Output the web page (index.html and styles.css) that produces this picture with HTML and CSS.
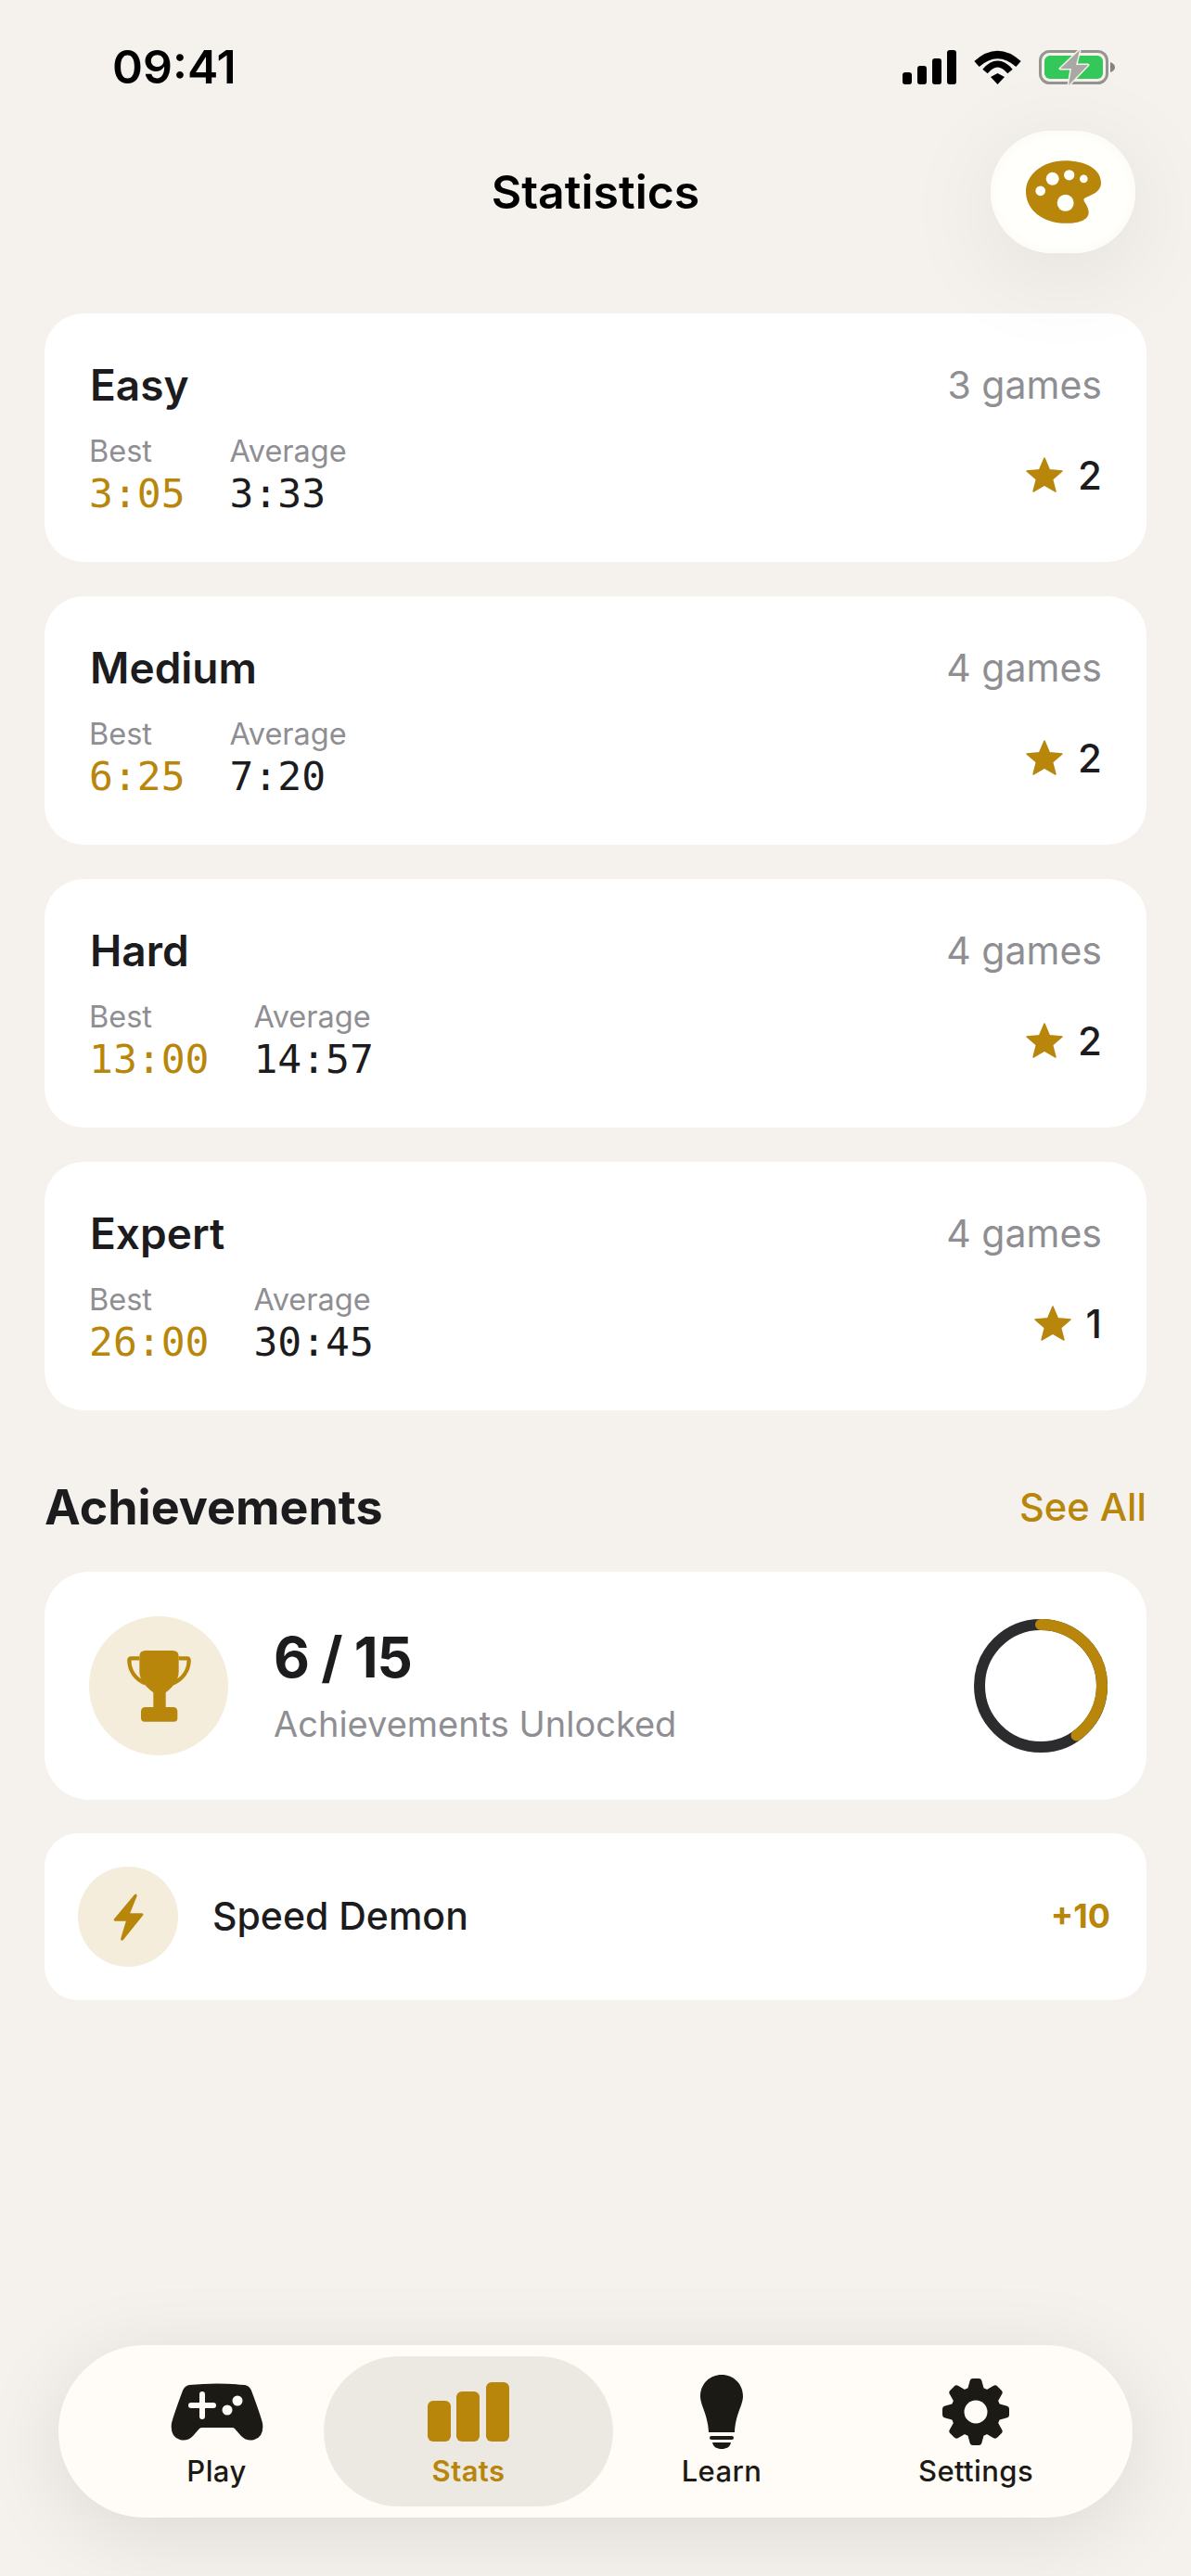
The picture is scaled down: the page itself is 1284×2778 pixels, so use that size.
FILE: index.html
```html
<!DOCTYPE html>
<html lang="en">
  <head>
    <meta charset="UTF-8" />
    <meta name="viewport" content="width=device-width, initial-scale=1.0" />
    <title>Statistics</title>
    <link rel="stylesheet" href="styles.css">
  </head>
  <body>
    <svg class="defs" width="0" height="0">
      <defs>
        <path id="star" d="M22 4 L27.4 16.8 L41 18 L30.6 27 L34 40 L22 33.2 L10 40 L13.4 27 L3 18 L16.6 16.8 Z" />
        <path id="tooth" d="M-9 -24 L-6.5 -33 Q-6 -36 -3 -36 H3 Q6 -36 6.5 -33 L9 -24 Z" />
      </defs>
    </svg>

    <!-- Status bar -->
    <div class="status-bar">
      <span class="time">09:41</span>
      <div class="status-icons">
        <svg width="58" height="37" viewBox="0 0 58 37">
          <rect x="0" y="24" width="10" height="13" rx="3" />
          <rect x="16" y="17" width="10" height="20" rx="3" />
          <rect x="32" y="9" width="10" height="28" rx="3" />
          <rect x="48" y="0" width="10" height="37" rx="3" />
        </svg>
        <svg width="51" height="37" viewBox="0 0 51 37">
          <path d="M3 15 Q25.5 -5 48 15" fill="none" stroke="#000" stroke-width="8" />
          <path d="M12 23 Q25.5 7 39 23" fill="none" stroke="#000" stroke-width="7" />
          <path d="M18 29 L25.5 25 L33 29 L25.5 37 Z" />
        </svg>
        <svg width="82" height="39" viewBox="0 0 82 39">
          <rect x="1.5" y="2.5" width="72" height="34" rx="10" fill="none" stroke="#96948f" stroke-width="3" />
          <rect x="6" y="7" width="63" height="25" rx="6" fill="#34c759" />
          <path d="M77 14 Q82 16 82 19.5 Q82 23 77 25 Z" fill="#85837e" />
          <path d="M44 1 L23 21 H35 L32 39 L53 17 H40 Z" fill="#aaa8a3" stroke="#f5f2ed" stroke-width="3" stroke-linejoin="round" paint-order="stroke" />
        </svg>
      </div>
    </div>

    <!-- Header -->
    <header class="header">
      <h1>Statistics</h1>
      <button class="theme-btn">
        <svg width="81" height="68" viewBox="0 0 243 203">
          <path fill="#b8860b" d="M125 0 C195 0 243 28 243 72 C243 105 205 112 190 122 C180 130 200 140 203 165 C205 190 175 203 130 203 C55 203 0 160 0 100 C0 45 55 0 125 0 Z" />
          <circle cx="86" cy="59" r="21" fill="#fffffb" />
          <circle cx="140" cy="47" r="17" fill="#fffffb" />
          <circle cx="187" cy="59" r="13" fill="#fffffb" />
          <circle cx="47" cy="98" r="16" fill="#fffffb" />
          <circle cx="128" cy="137" r="27" fill="#fffffb" />
        </svg>
      </button>
    </header>

    <main class="content">
      <div class="card level">
        <div class="level-top">
          <span class="level-name">Easy</span>
          <span class="games">3 games</span>
        </div>
        <div class="level-bottom">
          <div class="times">
            <div><div class="time-label">Best</div><div class="time-value best">3:05</div></div>
            <div><div class="time-label">Average</div><div class="time-value">3:33</div></div>
          </div>
          <div class="stars"><svg width="44" height="44" viewBox="0 0 44 44"><use href="#star" /></svg><span>2</span></div>
        </div>
      </div>

      <div class="card level">
        <div class="level-top">
          <span class="level-name">Medium</span>
          <span class="games">4 games</span>
        </div>
        <div class="level-bottom">
          <div class="times">
            <div><div class="time-label">Best</div><div class="time-value best">6:25</div></div>
            <div><div class="time-label">Average</div><div class="time-value">7:20</div></div>
          </div>
          <div class="stars"><svg width="44" height="44" viewBox="0 0 44 44"><use href="#star" /></svg><span>2</span></div>
        </div>
      </div>

      <div class="card level">
        <div class="level-top">
          <span class="level-name">Hard</span>
          <span class="games">4 games</span>
        </div>
        <div class="level-bottom">
          <div class="times">
            <div><div class="time-label">Best</div><div class="time-value best">13:00</div></div>
            <div><div class="time-label">Average</div><div class="time-value">14:57</div></div>
          </div>
          <div class="stars"><svg width="44" height="44" viewBox="0 0 44 44"><use href="#star" /></svg><span>2</span></div>
        </div>
      </div>

      <div class="card level">
        <div class="level-top">
          <span class="level-name">Expert</span>
          <span class="games">4 games</span>
        </div>
        <div class="level-bottom">
          <div class="times">
            <div><div class="time-label">Best</div><div class="time-value best">26:00</div></div>
            <div><div class="time-label">Average</div><div class="time-value">30:45</div></div>
          </div>
          <div class="stars"><svg width="44" height="44" viewBox="0 0 44 44"><use href="#star" /></svg><span>1</span></div>
        </div>
      </div>

      <div class="section-head">
        <h2>Achievements</h2>
        <span class="see-all">See All</span>
      </div>

      <div class="card summary">
        <div class="badge badge-large">
          <svg width="69" height="78" viewBox="0 0 207 232">
            <path d="M40 27 H13 Q7 27 7 35 C8 70 30 95 58 108" fill="none" stroke="#b8860b" stroke-width="13" />
            <path d="M167 27 H194 Q200 27 200 35 C199 70 177 95 149 108" fill="none" stroke="#b8860b" stroke-width="13" />
            <path fill="#b8860b" d="M40 20 Q40 2 60 2 H147 Q167 2 167 20 V70 C167 100 145 122 125 138 V185 H148 Q163 185 163 200 V220 Q163 232 151 232 H57 Q45 232 45 220 V200 Q45 185 60 185 H85 V138 C65 122 40 100 40 70 Z" />
          </svg>
        </div>
        <div class="summary-text">
          <div class="summary-count">6 / 15</div>
          <div class="summary-label">Achievements Unlocked</div>
        </div>
        <svg class="ring" width="144" height="144" viewBox="0 0 144 144">
          <circle cx="72" cy="72" r="66" fill="none" stroke="#2c2c2e" stroke-width="12" />
          <circle cx="72" cy="72" r="66" fill="none" stroke="#b8860b" stroke-width="12" stroke-linecap="round"
            stroke-dasharray="165.9 414.7" transform="rotate(-90 72 72)" />
        </svg>
      </div>

      <div class="card achievement">
        <div class="badge badge-small">
          <svg width="33" height="53" viewBox="0 0 100 158">
            <path fill="#b8860b" d="M70 5 L3 85 Q0 92 8 92 H42 L25 148 Q24 160 33 153 L98 72 Q100 66 92 66 H55 L78 9 Q77 0 70 5 Z" />
          </svg>
        </div>
        <span class="achievement-name">Speed Demon</span>
        <span class="points">+10</span>
      </div>
    </main>

    <!-- Tab bar -->
    <nav class="tabbar">
      <div class="tab">
        <div class="tab-icon">
          <svg width="100" height="62" viewBox="0 0 100 62">
            <path fill="#1c1a15" d="M20 2 Q50 -1 80 2 Q85 3 87 8 Q96 32 99 43 Q101 58 90 61 Q82 63 76 57 L69 49 Q68 48 66 48 H34 Q32 48 31 49 L24 57 Q18 63 10 61 Q-1 58 1 43 Q4 32 13 8 Q15 3 20 2 Z" />
            <path d="M22 24 H46 M34 12 V36" stroke="#fffcf7" stroke-width="6" stroke-linecap="round" />
            <circle cx="61" cy="29" r="5.5" fill="#fffcf7" />
            <circle cx="72" cy="19" r="5.5" fill="#fffcf7" />
          </svg>
        </div>
        <span>Play</span>
      </div>
      <div class="tab active">
        <div class="tab-icon">
          <svg width="88" height="64" viewBox="0 0 88 64">
            <rect x="0" y="20" width="25" height="44" rx="6" />
            <rect x="31" y="10" width="25" height="54" rx="6" />
            <rect x="63" y="0" width="25" height="64" rx="6" />
          </svg>
        </div>
        <span>Stats</span>
      </div>
      <div class="tab">
        <div class="tab-icon">
          <svg width="46" height="80" viewBox="0 0 46 80">
            <path fill="#1c1a15" d="M23 0 C36 0 46 10 46 23 C46 33 38 42 37 62 H9 C8 42 0 33 0 23 C0 10 10 0 23 0 Z" />
            <rect x="10" y="66" width="26" height="4" rx="2" fill="#1c1a15" />
            <path fill="#1c1a15" d="M13 73 H33 C32 78 28 80 23 80 C18 80 14 78 13 73 Z" />
          </svg>
        </div>
        <span>Learn</span>
      </div>
      <div class="tab">
        <div class="tab-icon">
          <svg width="72" height="72" viewBox="-36 -36 72 72">
            <g fill="#1c1a15">
              <circle r="27" />
              <use href="#tooth" />
              <use href="#tooth" transform="rotate(45)" />
              <use href="#tooth" transform="rotate(90)" />
              <use href="#tooth" transform="rotate(135)" />
              <use href="#tooth" transform="rotate(180)" />
              <use href="#tooth" transform="rotate(225)" />
              <use href="#tooth" transform="rotate(270)" />
              <use href="#tooth" transform="rotate(315)" />
            </g>
            <circle r="12.5" fill="#fffcf7" />
          </svg>
        </div>
        <span>Settings</span>
      </div>
    </nav>
  </body>
</html>
```

FILE: styles.css
```css
* {
  box-sizing: border-box;
}

body {
  font-family: Inter, "Noto Sans", sans-serif;
  background-color: #f5f2ed;
  color: #1c1c1e;
  margin: 0;
  height: 2778px;
  overflow: hidden;
  display: flex;
  flex-direction: column;
}

.defs {
  position: absolute;
}

/* Status bar */
.status-bar {
  display: flex;
  justify-content: space-between;
  align-items: center;
  height: 56px;
  margin-top: 44px;
  padding: 0 82px 0 121px;
}

.time {
  font-size: 50px;
  font-weight: 600;
  color: #000;
}

.status-icons {
  display: flex;
  align-items: center;
  gap: 19px;
}

/* Header */
.header {
  position: relative;
  z-index: 1;
  display: flex;
  justify-content: center;
  align-items: center;
  height: 132px;
  margin-top: 41px;
}

h1 {
  font-size: 50px;
  font-weight: 600;
  color: #000;
  margin: 0;
}

.theme-btn {
  position: absolute;
  right: 60px;
  top: 0;
  width: 156px;
  height: 132px;
  display: flex;
  align-items: center;
  justify-content: center;
  border: none;
  padding: 0;
  border-radius: 66px;
  background-color: #fffffb;
  box-shadow: inset 0 0 8px 4px #fdfbf7, 0 20px 110px rgba(0, 0, 0, 0.08);
}

/* Cards */
.content {
  padding: 65px 48px 0;
}

.card {
  background-color: #fff;
  border-radius: 42px;
}

.level {
  height: 268px;
  padding: 49px 48px 48px;
  margin-bottom: 37px;
}

.level-top {
  display: flex;
  justify-content: space-between;
  align-items: center;
  height: 56px;
}

.level-name {
  font-size: 46px;
  font-weight: 600;
  padding-left: 1px;
}

.games {
  font-size: 41px;
  color: #8e8e93;
}

.level-bottom {
  display: flex;
  justify-content: space-between;
  align-items: center;
  margin-top: 25px;
}

.times {
  display: flex;
  gap: 48px;
}

.time-label {
  font-size: 32.5px;
  line-height: 38px;
  color: #8e8e93;
}

.time-value {
  font-family: "DejaVu Sans Mono", "Liberation Mono", monospace;
  font-size: 43px;
  line-height: 48px;
  margin-top: 2px;
}

.time-value.best {
  color: #b8860b;
}

.stars {
  display: flex;
  align-items: center;
  gap: 14px;
  font-size: 42px;
  font-weight: 500;
}

.stars svg {
  fill: #b8860b;
  stroke: #b8860b;
  stroke-width: 1.5;
  stroke-linejoin: round;
}

/* Achievements */
.section-head {
  display: flex;
  justify-content: space-between;
  align-items: center;
  height: 64px;
  margin-top: 72px;
  margin-bottom: 38px;
}

h2 {
  font-size: 52px;
  font-weight: 700;
  margin: 0;
}

.see-all {
  font-size: 41.5px;
  font-weight: 500;
  color: #b8860b;
}

.badge {
  flex: none;
  display: flex;
  align-items: center;
  justify-content: center;
  border-radius: 50%;
  background-color: #f4eddc;
}

.badge-large {
  width: 150px;
  height: 150px;
}

.badge-small {
  width: 108px;
  height: 108px;
}

.summary {
  display: flex;
  align-items: center;
  height: 246px;
  padding: 0 42px 0 48px;
  border-radius: 48px;
}

.summary-text {
  flex: 1;
  margin-left: 49px;
}

.summary-count {
  font-size: 60px;
  font-weight: 700;
  line-height: 64px;
  letter-spacing: -1px;
}

.summary-label {
  font-size: 38px;
  line-height: 44px;
  margin-top: 18px;
  color: #8e8e93;
}

.achievement {
  display: flex;
  align-items: center;
  height: 180px;
  margin-top: 36px;
  padding: 0 39px 0 36px;
  border-radius: 36px;
}

.achievement-name {
  flex: 1;
  margin-left: 37px;
  padding-bottom: 2px;
  font-size: 41px;
  font-weight: 500;
}

.points {
  padding-bottom: 2px;
  font-size: 36px;
  font-weight: 700;
  color: #b8860b;
}

/* Tab bar */
.tabbar {
  display: grid;
  grid-template-columns: 231px 312px 234px 314px;
  height: 186px;
  margin: auto 63px 63px 63px;
  padding: 12px 12px 12px 55px;
  border-radius: 93px;
  background-color: #fffcf7;
  box-shadow: 0 16px 90px rgba(0, 0, 0, 0.1);
}

.tab {
  display: flex;
  flex-direction: column;
  align-items: center;
  padding-top: 20px;
  border-radius: 81px;
  font-size: 31px;
  font-weight: 500;
  line-height: 38px;
  letter-spacing: 0.4px;
  color: #1c1a15;
}

.tab-icon {
  display: flex;
  align-items: center;
  justify-content: center;
  height: 80px;
  margin-bottom: 5px;
}

.tab.active {
  background-color: #ece9e3;
  color: #b8860b;
  font-weight: 600;
}

.tab.active svg {
  fill: #b8860b;
}
```
